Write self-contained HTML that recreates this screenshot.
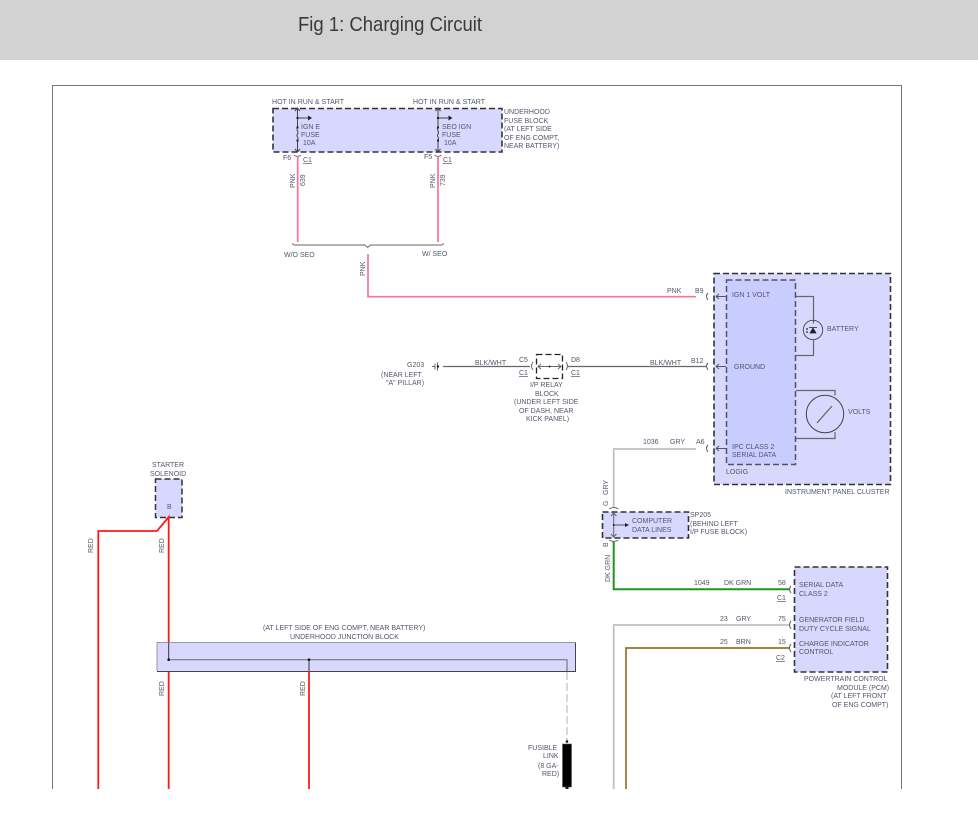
<!DOCTYPE html>
<html><head><meta charset="utf-8">
<style>
html,body{margin:0;padding:0;background:#fff;width:978px;height:815px;overflow:hidden}
svg{display:block;position:absolute;left:0;top:0}
text{font-family:"Liberation Sans",sans-serif;font-size:7px;fill:#55556f}
.d{fill:none;stroke:#333;stroke-width:1.6;stroke-dasharray:6 3}
.w{fill:none;stroke-linejoin:miter}
.c{fill:none;stroke:#777;stroke-width:1}
.a{fill:none;stroke:#444;stroke-width:1}
</style></head><body>
<svg width="978" height="815" viewBox="0 0 978 815" xmlns="http://www.w3.org/2000/svg">
<rect x="0" y="0" width="978" height="60" fill="#d2d2d2"/>
<text x="298" y="31" textLength="184" lengthAdjust="spacingAndGlyphs" style="font-size:20px;fill:#3a3a3a">Fig 1: Charging Circuit</text>

<!-- frame -->
<path d="M52.500 789V85.500H901.500V789" fill="none" stroke="#777" stroke-width="1"/>

<!-- fuse block -->
<rect x="273" y="108.500" width="229" height="43.500" class="d" style="fill:#d8d8ff"/>
<text x="272" y="104" textLength="72">HOT IN RUN &amp; START</text>
<text x="413" y="104" textLength="72">HOT IN RUN &amp; START</text>
<text x="504" y="114">UNDERHOOD</text>
<text x="504" y="123">FUSE BLOCK</text>
<text x="504" y="131">(AT LEFT SIDE</text>
<text x="504" y="140">OF ENG COMPT,</text>
<text x="504" y="148">NEAR BATTERY)</text>
<text x="301" y="129">IGN E</text>
<text x="301" y="137">FUSE</text>
<text x="303" y="145">10A</text>
<text x="442" y="129">SEO IGN</text>
<text x="442" y="137">FUSE</text>
<text x="444" y="145">10A</text>
<path class="a" d="M297.500 108v19M297.500 140v12M295 111l2.500-3 2.500 3M295 149l2.500 3 2.500-3M297.500 118h12M297.500 127c-2 3 2 5 0 7c-2 2 2 4 0 6"/>
<path class="a" d="M438 108v19M438 140v12M435.500 111l2.500-3 2.500 3M435.500 149l2.500 3 2.500-3M438 118h12M438 127c-2 3 2 5 0 7c-2 2 2 4 0 6"/>
<path d="M308 115.500l4 2.500-4 2.500zM448.500 115.500l4 2.500-4 2.500z" fill="#222"/>
<g fill="#222"><rect x="296.500" y="117" width="2" height="2"/><rect x="296.500" y="126.500" width="2" height="2"/><rect x="296.500" y="139.500" width="2" height="2"/><rect x="437" y="117" width="2" height="2"/><rect x="437" y="126.500" width="2" height="2"/><rect x="437" y="139.500" width="2" height="2"/></g>
<path class="c" d="M294 155q3.500 3 7 0M434.500 155q3.500 3 7 0"/>
<text x="283" y="160">F6</text><text x="303" y="162" text-decoration="underline">C1</text>
<text x="424" y="159">F5</text><text x="443" y="162" text-decoration="underline">C1</text>

<path class="w" stroke="#ff6f96" stroke-width="1.700" d="M297.700 157V242M438 157V242M368 254V296.700H696"/>
<text transform="translate(295 188) rotate(-90)">PNK</text>
<text transform="translate(305 186) rotate(-90)">639</text>
<text transform="translate(435 188) rotate(-90)">PNK</text>
<text transform="translate(445 186) rotate(-90)">739</text>
<text transform="translate(365 276) rotate(-90)">PNK</text>
<path fill="none" stroke="#666" stroke-width=".9" d="M292 243.500l2 1.500H365l2.700 2.500 2.700-2.500H442l2-1.500"/>
<text x="284" y="257">W/O SEO</text>
<text x="422" y="256">W/ SEO</text>
<text x="667" y="293">PNK</text>
<text x="695" y="293">B9</text>

<!-- IPC -->
<rect x="714" y="273.500" width="176.500" height="211" class="d" style="fill:#d8d8ff"/>
<rect x="726.500" y="280" width="69" height="184.500" fill="#c8ccff" stroke="#555" stroke-width="1.500" stroke-dasharray="6 3"/>
<text x="732" y="297">IGN 1 VOLT</text>
<text x="734" y="369">GROUND</text>
<text x="732" y="449">IPC CLASS 2</text>
<text x="732" y="457">SERIAL DATA</text>
<text x="726" y="474">LOGIG</text>
<text x="785" y="494">INSTRUMENT PANEL CLUSTER</text>
<text x="827" y="331">BATTERY</text>
<text x="848" y="414">VOLTS</text>
<path fill="none" stroke="#666" stroke-width="1.200" d="M796 296.500h17.500v27M813.500 340v15.500H796M796 390.500h39v5M835 432v6.500H796"/>
<circle cx="813" cy="330" r="9.700" fill="none" stroke="#444" stroke-width=".9"/>
<path d="M810 333h6l-3-5zM809 327.500h8" fill="#222" stroke="#222" stroke-width=".7"/>
<circle cx="807" cy="329" r=".9" fill="#222"/><circle cx="807" cy="332" r=".9" fill="#222"/>
<circle cx="825" cy="414" r="18.700" fill="none" stroke="#444" stroke-width="1"/>
<path d="M817 423L832 406" stroke="#666" stroke-width="1.300"/>
<g fill="none" stroke="#555" stroke-width="1">
<path d="M708 293q-3 3 0 7M716 296.500h10M716 296.500l3-2.500M716 296.500l3 2.500"/>
<path d="M708 363q-3 3 0 7M716 366.500h10M716 366.500l3-2.500M716 366.500l3 2.500"/>
<path d="M708 445q-3 3 0 7M716 448.500h10M716 448.500l3-2.500M716 448.500l3 2.500"/>
</g>

<!-- ground line and relay -->
<path class="w" stroke="#666" stroke-width="1.200" d="M443 366.500H530M568 366.500H707"/>
<path fill="none" stroke="#666" stroke-width="1" d="M432 366.500h3M435 363.500v6M437.500 362.500v8"/>
<circle cx="438" cy="366.500" r="1.200" fill="#222"/>
<text x="407" y="367">G203</text>
<text x="381" y="377">(NEAR LEFT</text>
<text x="386" y="385">"A" PILLAR)</text>
<text x="475" y="365">BLK/WHT</text>
<text x="519" y="362">C5</text>
<text x="519" y="375" text-decoration="underline">C1</text>
<text x="571" y="362">D8</text>
<text x="571" y="375" text-decoration="underline">C1</text>
<rect x="536.500" y="354.500" width="26" height="24" fill="#fff" stroke="#222" stroke-width="1.300" stroke-dasharray="6 3"/>
<path fill="none" stroke="#666" stroke-width="1" d="M533 362q-3 4 0 8M566 362q3 4 0 8M538 366.500h23M541 364l-3 2.500 3 2.500M558 364l3 2.500-3 2.500"/>
<circle cx="549.500" cy="366.500" r="1" fill="#222"/>
<text x="530" y="387">I/P RELAY</text>
<text x="535" y="396">BLOCK</text>
<text x="514" y="404">(UNDER LEFT SIDE</text>
<text x="519" y="413">OF DASH, NEAR</text>
<text x="526" y="421">KICK PANEL)</text>
<text x="650" y="365">BLK/WHT</text>
<text x="691" y="363">B12</text>

<!-- gray data -->
<path class="w" stroke="#c0c0c0" stroke-width="1.800" d="M696 449H613.700V508"/>
<text x="643" y="444">1036</text><text x="670" y="444">GRY</text><text x="696" y="444">A6</text>
<text transform="translate(608 495) rotate(-90)">GRY</text>
<text transform="translate(608 506) rotate(-90)">G</text>

<!-- SP205 -->
<rect x="602.500" y="512" width="86" height="26" class="d" style="fill:#d8d8ff"/>
<path fill="none" stroke="#666" stroke-width="1" d="M609 509q4.700-3 9.400 0M609 540q4.700 3 9.400 0M613.700 513v24M611 516l2.700-3 2.700 3M611 534l2.700 3 2.700-3"/>
<path d="M613.700 525h13" stroke="#444" stroke-width=".9"/><path d="M625 523l4 2-4 2z" fill="#222"/><circle cx="613.700" cy="525" r="1" fill="#222"/>
<text x="632" y="523">COMPUTER</text>
<text x="632" y="532">DATA LINES</text>
<text x="690" y="517">SP205</text>
<text x="690" y="526">(BEHIND LEFT</text>
<text x="690" y="534">I/P FUSE BLOCK)</text>

<!-- green -->
<path class="w" stroke="#1f961f" stroke-width="2" d="M613.700 541V589.300H789"/>
<text transform="translate(608 547) rotate(-90)">B</text>
<text transform="translate(610 582) rotate(-90)">DK GRN</text>
<text x="694" y="585">1049</text><text x="724" y="585">DK GRN</text><text x="778" y="585">58</text>
<text x="777" y="600" text-decoration="underline">C1</text>

<!-- PCM -->
<rect x="794.500" y="567" width="93" height="105" class="d" style="fill:#d8d8ff"/>
<text x="799" y="587">SERIAL DATA</text><text x="799" y="596">CLASS 2</text>
<text x="799" y="622">GENERATOR FIELD</text><text x="799" y="631">DUTY CYCLE SIGNAL</text>
<text x="799" y="646">CHARGE INDICATOR</text><text x="799" y="654">CONTROL</text>
<text x="804" y="681">POWERTRAIN CONTROL</text>
<text x="837" y="690">MODULE (PCM)</text>
<text x="831" y="698">(AT LEFT FRONT</text>
<text x="832" y="707">OF ENG COMPT)</text>
<path class="w" stroke="#c0c0c0" stroke-width="1.800" d="M613.700 789V625H789"/>
<path class="w" stroke="#94722a" stroke-width="1.700" d="M626 789V648H789"/>
<text x="720" y="621">23</text><text x="736" y="621">GRY</text><text x="778" y="621">75</text>
<text x="720" y="644">25</text><text x="736" y="644">BRN</text><text x="778" y="644">15</text>
<text x="776" y="660" text-decoration="underline">C2</text>
<path fill="none" stroke="#555" stroke-width="1" d="M791 586q-3 3 0 7M791 621q-3 4 0 8M791 644q-3 4 0 8"/>

<!-- solenoid -->
<text x="152" y="467">STARTER</text>
<text x="150" y="476">SOLENOID</text>
<rect x="155.500" y="479" width="26.500" height="38.500" fill="#d8d8ff" stroke="#333" stroke-width="1.500" stroke-dasharray="6 3"/>
<text x="167" y="509">B</text>

<!-- red wires -->
<path class="w" stroke="#ff1a1a" stroke-width="1.800" d="M98.300 789V531H157L168.700 517V789"/>
<text transform="translate(93 553) rotate(-90)">RED</text>
<text transform="translate(164 553) rotate(-90)">RED</text>
<text transform="translate(164 696) rotate(-90)">RED</text>
<text transform="translate(305 696) rotate(-90)">RED</text>

<!-- junction block -->
<rect x="157" y="642.500" width="418.500" height="29" fill="#d8d8ff"/>
<path fill="none" stroke="#999" stroke-width="1" d="M157 671V642.500H575.500"/>
<path fill="none" stroke="#444" stroke-width="1" d="M157 671.500H575.500V642.500"/>
<path fill="none" stroke="#777" stroke-width="1.200" d="M168.700 659.700H567V671"/>
<path stroke="#333" stroke-width="1" d="M168.700 642.500V660M309 660V671"/>
<circle cx="168.700" cy="659.700" r="1.300" fill="#111"/><circle cx="309" cy="659.700" r="1.300" fill="#111"/>
<path class="w" stroke="#ff1a1a" stroke-width="1.800" d="M309 671V789"/>
<text x="263" y="630">(AT LEFT SIDE OF ENG COMPT, NEAR BATTERY)</text>
<text x="290" y="639">UNDERHOOD JUNCTION BLOCK</text>

<!-- fusible -->
<path stroke="#ccc" stroke-width="1.500" stroke-dasharray="8 3" d="M567 672V741"/>
<rect x="562.500" y="744" width="9" height="43" fill="#000" stroke="#555" stroke-width=".6"/>
<circle cx="567" cy="741.500" r="1.300" fill="#111"/><rect x="565.500" y="787" width="3" height="2" fill="#111"/>
<text x="528" y="750">FUSIBLE</text>
<text x="543" y="758">LINK</text>
<text x="538" y="768">(8 GA-</text>
<text x="542" y="776">RED)</text>
<rect x="0" y="789" width="978" height="26" fill="#fff"/>
</svg>
</body></html>
